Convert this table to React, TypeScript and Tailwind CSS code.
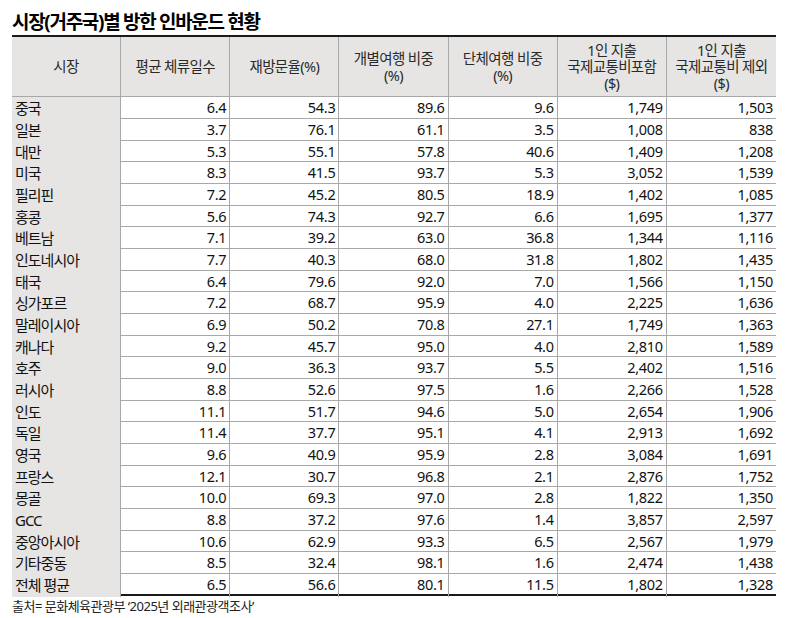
const headers: string[][] = [
  ['시장'],
  ['평균 체류일수'],
  ['재방문율(%)'],
  ['개별여행 비중', '(%)'],
  ['단체여행 비중', '(%)'],
  ['1인 지출', '국제교통비포함', '($)'],
  ['1인 지출', '국제교통비 제외', '($)'],
]

const rows: [string, string, string, string, string, string, string][] = [
  ['중국', '6.4', '54.3', '89.6', '9.6', '1,749', '1,503'],
  ['일본', '3.7', '76.1', '61.1', '3.5', '1,008', '838'],
  ['대만', '5.3', '55.1', '57.8', '40.6', '1,409', '1,208'],
  ['미국', '8.3', '41.5', '93.7', '5.3', '3,052', '1,539'],
  ['필리핀', '7.2', '45.2', '80.5', '18.9', '1,402', '1,085'],
  ['홍콩', '5.6', '74.3', '92.7', '6.6', '1,695', '1,377'],
  ['베트남', '7.1', '39.2', '63.0', '36.8', '1,344', '1,116'],
  ['인도네시아', '7.7', '40.3', '68.0', '31.8', '1,802', '1,435'],
  ['태국', '6.4', '79.6', '92.0', '7.0', '1,566', '1,150'],
  ['싱가포르', '7.2', '68.7', '95.9', '4.0', '2,225', '1,636'],
  ['말레이시아', '6.9', '50.2', '70.8', '27.1', '1,749', '1,363'],
  ['캐나다', '9.2', '45.7', '95.0', '4.0', '2,810', '1,589'],
  ['호주', '9.0', '36.3', '93.7', '5.5', '2,402', '1,516'],
  ['러시아', '8.8', '52.6', '97.5', '1.6', '2,266', '1,528'],
  ['인도', '11.1', '51.7', '94.6', '5.0', '2,654', '1,906'],
  ['독일', '11.4', '37.7', '95.1', '4.1', '2,913', '1,692'],
  ['영국', '9.6', '40.9', '95.9', '2.8', '3,084', '1,691'],
  ['프랑스', '12.1', '30.7', '96.8', '2.1', '2,876', '1,752'],
  ['몽골', '10.0', '69.3', '97.0', '2.8', '1,822', '1,350'],
  ['GCC', '8.8', '37.2', '97.6', '1.4', '3,857', '2,597'],
  ['중앙아시아', '10.6', '62.9', '93.3', '6.5', '2,567', '1,979'],
  ['기타중동', '8.5', '32.4', '98.1', '1.6', '2,474', '1,438'],
  ['전체 평균', '6.5', '56.6', '80.1', '11.5', '1,802', '1,328'],
]

// 498px spread over 23 rows: every third row is one pixel shorter
const shortRow = (r: number) => r % 3 === 2

export default function App() {
  return (
    <div className="w-[794px] h-[618px] bg-white text-[#111] font-['Noto_Sans','Noto_Sans_CJK_KR',sans-serif] overflow-hidden">
      <div className="w-[764px] ml-[12px]">
        <div className="h-[35px] flex items-end">
          <h1 className="text-[19px] leading-[24px] font-bold tracking-[-1.3px] text-black mb-[1px]">
            시장(거주국)별 방한 인바운드 현황
          </h1>
        </div>

        <div className="border-t-2 border-[#1a1a1a]">
          <div className="grid grid-cols-7 h-[60px] bg-[#e6e5e3] border-b border-[#a8a8a8]">
            {headers.map((lines, i) => (
              <div
                key={i}
                className={`flex flex-col items-center justify-center text-[14.5px] leading-[16.5px] tracking-[-0.6px] text-[#2a2a2a] ${i < 6 ? 'border-r border-[#a8a8a8]' : ''}`}
              >
                {lines.map((l) => (
                  <span key={l}>{l}</span>
                ))}
              </div>
            ))}
          </div>

          {rows.map((row, r) => (
            <div
              key={row[0]}
              className={`grid grid-cols-7 ${shortRow(r) ? 'h-[21px]' : 'h-[22px]'} ${r === rows.length - 1 ? 'border-b-2 border-[#1a1a1a]' : 'border-b border-[#a8a8a8]'}`}
            >
              <div className="bg-[#e6e5e3] border-r border-[#a8a8a8] flex items-center pl-[3px] text-[15px] tracking-[-1px]">
                {row[0]}
              </div>
              {row.slice(1).map((v, i) => (
                <div
                  key={i}
                  className={`flex items-center justify-end pr-[3px] text-[14.5px] tracking-[-0.3px] ${i < 5 ? 'border-r border-[#a8a8a8]' : ''}`}
                >
                  {v}
                </div>
              ))}
            </div>
          ))}
        </div>

        <p className="mt-[1px] text-[13px] leading-[18px] tracking-[-0.5px] text-[#222]">
          출처= 문화체육관광부 ‘2025년 외래관광객조사’
        </p>
      </div>
    </div>
  )
}
